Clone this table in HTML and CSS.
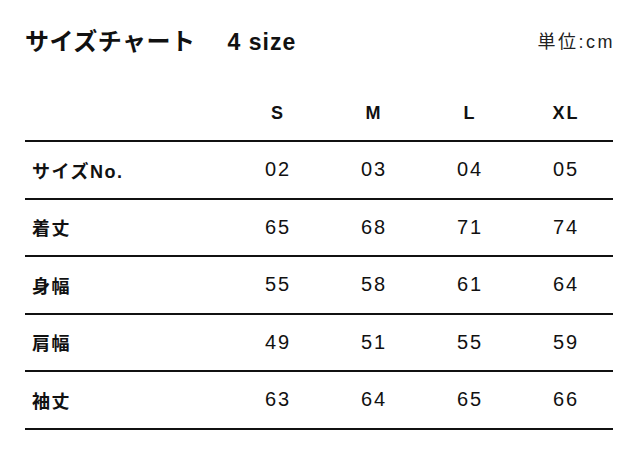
FILE: index.html
```html
<!DOCTYPE html>
<html lang="ja">
<head>
<meta charset="utf-8">
<link rel="stylesheet" href="styles.css">
</head>
<body>
<div class="page">
  <div class="head">
    <h1 class="title">サイズチャート<span class="count">4 size</span></h1>
    <div class="unit">単位:cm</div>
  </div>
  <table class="chart">
    <thead>
      <tr><th class="label"></th><th>S</th><th>M</th><th>L</th><th>XL</th></tr>
    </thead>
    <tbody>
      <tr><th class="label">サイズNo.</th><td>02</td><td>03</td><td>04</td><td>05</td></tr>
      <tr><th class="label">着丈</th><td>65</td><td>68</td><td>71</td><td>74</td></tr>
      <tr><th class="label">身幅</th><td>55</td><td>58</td><td>61</td><td>64</td></tr>
      <tr><th class="label">肩幅</th><td>49</td><td>51</td><td>55</td><td>59</td></tr>
      <tr><th class="label">袖丈</th><td>63</td><td>64</td><td>65</td><td>66</td></tr>
    </tbody>
  </table>
</div>
</body>
</html>
```
FILE: styles.css
```css
html, body {
  margin: 0;
  padding: 0;
  background: #fff;
}
body {
  font-family: "Liberation Sans", "Noto Sans CJK JP", sans-serif;
  color: #111;
}
.page {
  width: 588px;
  padding: 0 0 0 25px;
}
.head {
  display: flex;
  justify-content: space-between;
  align-items: flex-start;
  height: 84px;
}
.title {
  margin: 24px 0 0;
  font-size: 24px;
  line-height: 36px;
  font-weight: 700;
  letter-spacing: 0.5px;
}
.count {
  margin-left: 32px;
  font-size: 23px;
  letter-spacing: 1px;
}
.unit {
  margin-top: 29px;
  font-size: 18px;
  line-height: 26px;
  letter-spacing: 2.5px;
  margin-right: -2px;
  color: #222;
}
.chart {
  width: 588px;
  border-collapse: collapse;
  table-layout: fixed;
}
.chart th, .chart td {
  padding: 0;
  text-align: center;
}
.chart thead th {
  height: 53px;
  padding-top: 3px;
  font-size: 18px;
  font-weight: 700;
  letter-spacing: 2px;
  padding-left: 2px;
  border-bottom: 2px solid #111;
}
.chart tbody tr {
  border-bottom: 2px solid #111;
}
.chart tbody th, .chart tbody td {
  height: 55.5px;
}
.chart .label {
  width: 197px;
  text-align: left;
  padding-left: 7px;
  font-size: 18px;
  font-weight: 700;
  letter-spacing: 1.5px;
}
.chart td {
  font-size: 20px;
  font-weight: 400;
  letter-spacing: 2px;
  padding-left: 2px;
}
```
